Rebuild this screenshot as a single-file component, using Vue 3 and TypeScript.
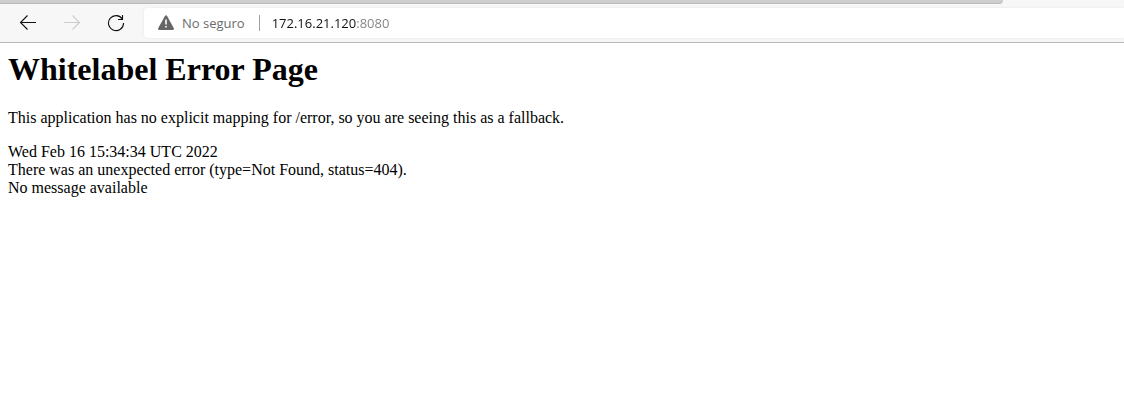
<script setup lang="ts">
import { ref } from 'vue'

const address = ref<string>('172.16.21.120:8080')
const details: string[] = [
  'Wed Feb 16 15:34:34 UTC 2022',
  'There was an unexpected error (type=Not Found, status=404).',
  'No message available',
]
</script>

<template>
  <div class="browser">
    <header>
      <div class="tabs"><div class="strip"></div></div>
      <nav class="toolbar" aria-label="Browser">
        <button type="button" class="tool" aria-label="Back">
          <svg width="18" height="16" viewBox="0 0 18 16"><path d="M17 7.5H1.5M8.5 .5L1.5 7.5L8.5 14.5" /></svg>
        </button>
        <button type="button" class="tool" aria-label="Forward" disabled>
          <svg width="18" height="16" viewBox="0 0 18 16"><path d="M1 7.5H16.5M9.5 .5L16.5 7.5L9.5 14.5" /></svg>
        </button>
        <button type="button" class="tool" aria-label="Reload">
          <svg width="18" height="18" viewBox="0 0 18 18"><path d="M15.4 5.2A7.5 7.5 0 1 0 16.5 9M15.5 1V5.5H11" /></svg>
        </button>
        <div class="address">
          <button type="button" class="security">
            <svg width="16" height="16" viewBox="0 0 16 16">
              <path class="warning" d="M6.8 1.2Q8 -.7 9.2 1.2L15.7 13Q16.5 15 14.6 15H1.4Q-.5 15 .3 13Z" />
              <path class="mark" d="M7.2 4.5H8.8V9.5H7.2ZM7.2 11H8.8V12.6H7.2Z" />
            </svg>
            <span>No seguro</span>
          </button>
          <input v-model="address" class="url" type="text" aria-label="Address" spellcheck="false" />
        </div>
      </nav>
    </header>
    <main>
      <h1>Whitelabel Error Page</h1>
      <p>This application has no explicit mapping for /error, so you are seeing this as a fallback.</p>
      <div v-for="line in details" :key="line">{{ line }}</div>
    </main>
  </div>
</template>

<style>
body {
  margin: 0;
  background: #fff;
}
</style>

<style scoped>
header {
  background: #f7f7f7;
  border-bottom: 1px solid #b9b9b9;
}
.tabs {
  height: 4px;
  padding-right: 121px;
}
.strip {
  box-sizing: border-box;
  height: 4px;
  background: #cdcdcd;
  border-bottom: 1px solid #bababa;
  border-bottom-right-radius: 4px;
}
.toolbar {
  display: flex;
  align-items: center;
  gap: 12px;
  padding: 4px 0 4px 12px;
}
button {
  padding: 0;
  border: 0;
  background: none;
  font: inherit;
}
.tool {
  display: flex;
  align-items: center;
  justify-content: center;
  width: 32px;
  height: 30px;
  color: #111;
}
.tool:disabled {
  color: #ccc;
}
.tool path {
  fill: none;
  stroke: currentColor;
  stroke-width: 1.1;
}
.address {
  display: flex;
  flex: 1;
  align-items: center;
  height: 30px;
  padding-left: 14px;
  border-radius: 4px 0 0 4px;
  background: #fff;
  box-shadow: 0 0 3px #e6e6e6;
  font: 13px/18px "Open Sans", "Noto Sans", sans-serif;
}
.security {
  display: flex;
  align-items: center;
  gap: 8px;
  padding-right: 14px;
  border-right: 1px solid #a0a0a0;
  height: 16px;
  color: #6b6b6b;
  white-space: nowrap;
}
.warning {
  fill: #666;
}
.mark {
  fill: #fff;
}
.url {
  flex: 1;
  min-width: 0;
  height: 18px;
  margin-left: 12px;
  padding: 0;
  border: 0;
  outline: 0;
  font: inherit;
  color: transparent;
  caret-color: #111;
  background: linear-gradient(90deg, #111 84px, #808080 84px);
  background-clip: text;
}
main {
  padding: 8px;
  font: 16px/18px "Liberation Serif", "Times New Roman", serif;
  color: #000;
}
h1 {
  margin: 0 0 21px;
  font-size: 32px;
  line-height: 37px;
}
p {
  margin: 0 0 16px;
}
</style>
